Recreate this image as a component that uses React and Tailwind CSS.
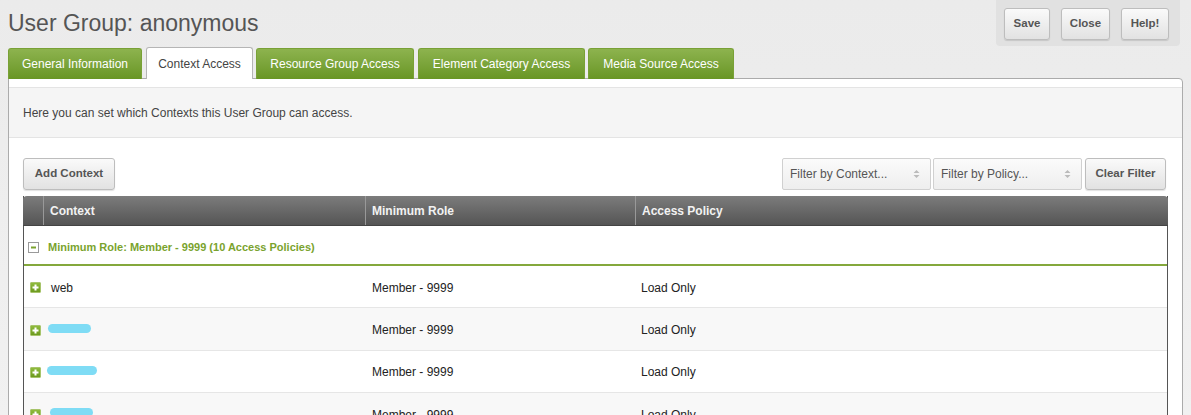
import React from "react";

const tabs = [
  { label: "General Information", w: "w-[134px]", ml: "ml-0" },
  { label: "Context Access", w: "w-[107px]", ml: "ml-[4px]", active: true },
  { label: "Resource Group Access", w: "w-[158px]", ml: "ml-[3px]" },
  { label: "Element Category Access", w: "w-[167px]", ml: "ml-[4px]" },
  { label: "Media Source Access", w: "w-[146px]", ml: "ml-[3px]" },
];

const rows = [
  { name: "web" },
  { blur: "w-[43px] ml-[-3px]" },
  { blur: "w-[50px] ml-[-4px]" },
  { blur: "w-[43px] ml-[-1px]" },
];

function PlusIcon() {
  return (
    <span className="flex h-[11px] w-[11px] items-center justify-center rounded-[1px] border border-[#a7c46b] bg-gradient-to-b from-[#8fbb3c] to-[#6d9a1f]">
      <svg width="7" height="7" viewBox="0 0 7 7">
        <path d="M3.5 0.5v6M0.5 3.5h6" stroke="#fff" strokeWidth="2" />
      </svg>
    </span>
  );
}

function MinusIcon() {
  return (
    <span className="flex h-[11px] w-[11px] items-center justify-center border border-[#9a9a9a] bg-white">
      <svg width="7" height="7" viewBox="0 0 7 7">
        <path d="M1 3.5h5" stroke="#7aa32e" strokeWidth="2" />
      </svg>
    </span>
  );
}

function GrayButton({ children, className = "" }) {
  return (
    <button
      className={`h-[32px] rounded-[3px] border border-[#bdbdbd] bg-gradient-to-b from-[#fafafa] to-[#e2e2e2] text-[11.5px] font-bold text-[#555] shadow-[0_1px_1px_rgba(0,0,0,0.12)] ${className}`}
    >
      {children}
    </button>
  );
}

function FilterSelect({ label }) {
  return (
    <div className="flex h-[32px] w-[149px] items-center justify-between rounded-[2px] border border-[#d0d0d0] bg-gradient-to-b from-[#fbfbfb] to-[#eeeeee] pl-[7px] pr-[10px] text-[12px] text-[#555]">
      <span>{label}</span>
      <svg width="7" height="10" viewBox="0 0 7 10">
        <path d="M0.5 4L3.5 1L6.5 4Z M0.5 6L3.5 9L6.5 6Z" fill="#bbb" />
      </svg>
    </div>
  );
}

export default function App() {
  return (
    <div className="h-[415px] w-[1191px] overflow-hidden bg-gradient-to-b from-[#ebebeb] to-[#f1f1f1] font-['Liberation_Sans',Arial,sans-serif]">
      <div className="flex items-start justify-between">
        <h1 className="pl-[8px] pt-[8px] text-[23px] leading-[30px] text-[#555]">
          User Group: anonymous
        </h1>
        <div className="mr-[11px] flex h-[46px] gap-[11px] rounded-b-[4px] bg-[#e1e1e1] pl-[8px] pr-[11px] pt-[8px]">
          <GrayButton className="w-[46px]">Save</GrayButton>
          <GrayButton className="w-[49px]">Close</GrayButton>
          <GrayButton className="w-[48px]">Help!</GrayButton>
        </div>
      </div>

      <div className="relative z-10 ml-[8px] mt-[1px] flex h-[32px] items-end">
        {tabs.map((t) =>
          t.active ? (
            <div
              key={t.label}
              className={`${t.w} ${t.ml} flex h-[32px] items-center justify-center rounded-t-[3px] border border-b-0 border-[#b5b5b5] bg-white text-[12px] text-[#444]`}
            >
              {t.label}
            </div>
          ) : (
            <div
              key={t.label}
              className={`${t.w} ${t.ml} flex h-[31px] items-center justify-center rounded-t-[3px] border border-b-0 border-[#79a136] bg-gradient-to-b from-[#8db34e] to-[#699623] text-[12px] text-white`}
            >
              {t.label}
            </div>
          )
        )}
      </div>

      <div className="mx-[8px] -mt-px h-[400px] rounded-tr-[4px] border border-[#ababab] bg-white pt-[8px]">
        <div className="flex h-[51px] items-center border-y border-[#e4e4e4] bg-[#f5f5f5] px-[14px] pt-[1px] text-[12px] text-[#444]">
          Here you can set which Contexts this User Group can access.
        </div>

        <div className="px-[14px] pt-[20px]">
          <div className="flex items-center justify-between">
            <GrayButton className="w-[92px]">Add Context</GrayButton>
            <div className="mr-[2px] flex gap-[2px]">
              <FilterSelect label="Filter by Context..." />
              <FilterSelect label="Filter by Policy..." />
              <GrayButton className="ml-px w-[81px]">Clear Filter</GrayButton>
            </div>
          </div>

          <div className="mt-[6px] border-x border-[#555]">
            <div className="-mx-px flex h-[30px] rounded-t-[4px] border-b border-[#444] bg-gradient-to-b from-[#7c7c7c] to-[#555] text-[12px] font-bold text-[#f2f2f2]">
              <div className="w-[21px] border-r border-[#999]" />
              <div className="flex w-[322px] items-center border-r border-[#999] pl-[6px]">Context</div>
              <div className="flex w-[270px] items-center border-r border-[#999] pl-[6px]">Minimum Role</div>
              <div className="flex flex-1 items-center pl-[6px]">Access Policy</div>
            </div>

            <div className="flex h-[40px] items-center border-b-2 border-[#84a83c] pl-[4px] pt-[4px] text-[11px] font-bold text-[#7aa32e]">
              <MinusIcon />
              <span className="ml-[9px]">Minimum Role: Member - 9999 (10 Access Policies)</span>
            </div>

            {rows.map((r, i) => (
              <div
                key={i}
                className={`flex h-[42.4px] items-center border-b border-[#e6e6e6] pt-[2px] text-[12px] text-[#222] ${i % 2 === 1 ? "bg-[#f8f8f8]" : "bg-white"}`}
              >
                <div className="flex w-[21px] pl-[6px]">
                  <PlusIcon />
                </div>
                <div className="flex w-[322px] items-center pl-[6px]">
                  {r.name ? (
                    r.name
                  ) : (
                    <span className={`-mt-[4px] h-[9px] ${r.blur} rounded-full bg-[#7fdcf5]`} />
                  )}
                </div>
                <div className="w-[270px] pl-[5px]">Member - 9999</div>
                <div className="flex-1 pl-[4px]">Load Only</div>
              </div>
            ))}
          </div>
        </div>
      </div>
    </div>
  );
}
